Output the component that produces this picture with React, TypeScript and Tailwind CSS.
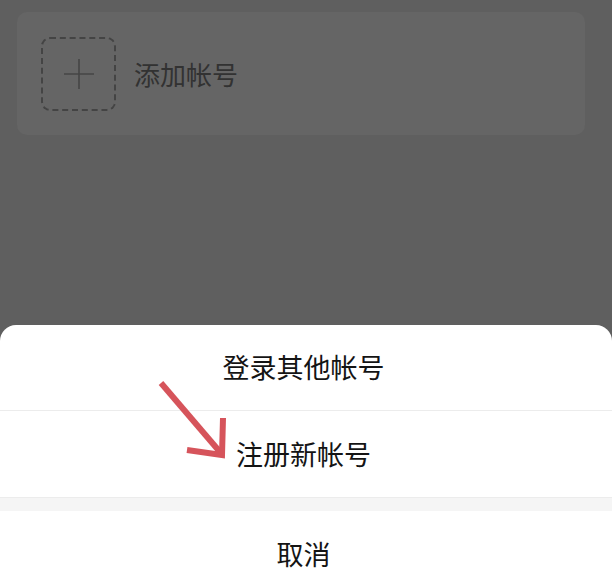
const font = { fontFamily: '"Noto Sans CJK SC", "Noto Sans", sans-serif' }

interface SheetRowProps {
  label: string
  divider?: boolean
}

function SheetRow({ label, divider }: SheetRowProps) {
  return (
    <div
      className={`flex h-[86px] items-center justify-center pr-[5px] text-[27px] text-[#141414] ${
        divider ? 'border-b border-[#ececec]' : ''
      }`}
    >
      {label}
    </div>
  )
}

export default function App() {
  return (
    <div className="relative h-[572px] w-[612px] overflow-hidden bg-[#5f5f5f]" style={font}>
      {/* account list behind the mask */}
      <div className="px-[17px] pt-3 pr-[27px]">
        <div className="flex h-[123px] items-center gap-[18px] rounded-[10px] bg-[#656565] pl-6">
          <div className="flex h-[74px] w-[75px] items-center justify-center rounded-[9px] border-2 border-dashed border-[#444444]">
            <svg width="32" height="32" viewBox="0 0 32 32">
              <path d="M16 1v30M1 16h30" stroke="#454545" strokeWidth="1.6" fill="none" />
            </svg>
          </div>
          <span className="text-[26px] text-[#323232]">添加帐号</span>
        </div>
      </div>

      {/* action sheet */}
      <div className="mt-[190px] overflow-hidden rounded-t-[16px] bg-white">
        <SheetRow label="登录其他帐号" divider />
        <SheetRow label="注册新帐号" />
        <div className="h-[14px] border-t border-[#ececec] bg-[#f5f5f5]" />
        <SheetRow label="取消" />
      </div>

      {/* annotation arrow */}
      <svg
        className="pointer-events-none absolute left-0 top-0"
        width="612"
        height="572"
        viewBox="0 0 612 572"
      >
        <g stroke="#d6545b" strokeWidth="6" strokeLinecap="butt" fill="none">
          <line x1="161" y1="383" x2="220" y2="452" />
          <polyline points="187,450 222,455 223,418" strokeLinejoin="miter" />
        </g>
      </svg>
    </div>
  )
}
